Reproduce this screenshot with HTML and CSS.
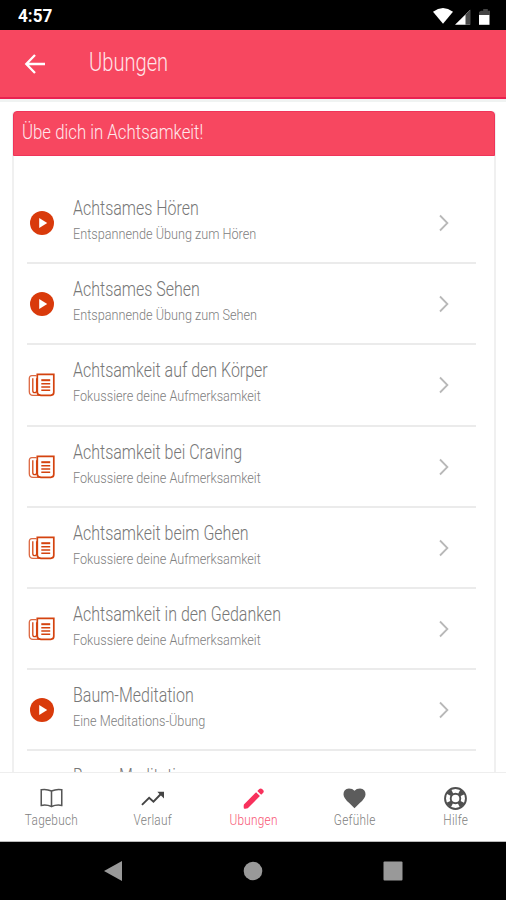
FILE: index.html
```html
<!DOCTYPE html>
<html lang="de">
<head>
<meta charset="utf-8">
<title>Ubungen</title>
<link rel="stylesheet" href="styles.css">
</head>
<body>
<svg class="defs" aria-hidden="true">
  <symbol id="play" viewBox="0 0 28 28"><circle cx="14" cy="14" r="12" fill="#d93a0b"/><path d="M11.200 9v10l8-5z" fill="#fff"/></symbol>
  <symbol id="news" viewBox="0 0 28 28" fill="none" stroke="#d4430f"><path d="M8.500 4.600H3.900Q1.300 4.600 1.300 7.600v12.800q0 3.700 3.700 4h8" stroke-width="1.300" stroke="#dc6842"/><path d="M9.300 3.400h16.500v17.900q0 3-3 3h-10q-3.500 0-3.500-3z" stroke-width="1.700"/><path d="M4.800 7.200v12.500q0 2 1.900 2t1.900-2V7.200" stroke-width="1.300"/><path d="M13.300 9.200h8.900" stroke-width="2"/><path d="M13.300 12.700h8.900M13.300 16h8.900M13.300 19.300h8.900" stroke-width="1.400"/></symbol>
  <symbol id="chev" viewBox="0 0 12 18"><path d="M2 1.500 9.400 9 2 16.500" fill="none" stroke="#b8b8b8" stroke-width="1.800"/></symbol>
</svg>
<div class="status">
  <span class="clock">4:57</span>
  <svg width="60" height="20" viewBox="0 0 60 20"><path d="M0 4.700Q10-2.700 20 4.700L10 16.800z" fill="#fff"/><path d="M37 3v14.800H22z" fill="#fff"/><path d="M32.500 7.500 37.500 2.500v15.300h-5z" fill="#4a4a4a"/><path d="M48 3.700h2.200V2h4.600v1.700H57V8H46V5z" fill="#444"/><path d="M46 8h10.500v9.800H46z" fill="#fff"/></svg>
</div>
<header class="appbar">
  <svg width="22" height="22" viewBox="0 0 22 22" fill="none" stroke="#fff" stroke-width="2.300"><path d="M21 11H3M11 2 2.300 11l8.700 9"/></svg>
  <h1><span class="t-title">Ubungen</span></h1>
</header>
<main class="content">
  <section class="card">
    <h2><span class="t-head">Übe dich in Achtsamkeit!</span></h2>
    <ul>
      <li><svg class="ico"><use href="#play"/></svg><div class="copy"><span class="name">Achtsames Hören</span><span class="desc">Entspannende Übung zum Hören</span></div><svg class="chev"><use href="#chev"/></svg></li>
      <li><svg class="ico"><use href="#play"/></svg><div class="copy"><span class="name">Achtsames Sehen</span><span class="desc">Entspannende Übung zum Sehen</span></div><svg class="chev"><use href="#chev"/></svg></li>
      <li><svg class="ico"><use href="#news"/></svg><div class="copy"><span class="name">Achtsamkeit auf den Körper</span><span class="desc">Fokussiere deine Aufmerksamkeit</span></div><svg class="chev"><use href="#chev"/></svg></li>
      <li><svg class="ico"><use href="#news"/></svg><div class="copy"><span class="name">Achtsamkeit bei Craving</span><span class="desc">Fokussiere deine Aufmerksamkeit</span></div><svg class="chev"><use href="#chev"/></svg></li>
      <li><svg class="ico"><use href="#news"/></svg><div class="copy"><span class="name">Achtsamkeit beim Gehen</span><span class="desc">Fokussiere deine Aufmerksamkeit</span></div><svg class="chev"><use href="#chev"/></svg></li>
      <li><svg class="ico"><use href="#news"/></svg><div class="copy"><span class="name">Achtsamkeit in den Gedanken</span><span class="desc">Fokussiere deine Aufmerksamkeit</span></div><svg class="chev"><use href="#chev"/></svg></li>
      <li><svg class="ico"><use href="#play"/></svg><div class="copy"><span class="name">Baum-Meditation</span><span class="desc">Eine Meditations-Übung</span></div><svg class="chev"><use href="#chev"/></svg></li>
      <li><div class="ico"></div><div class="copy"><span class="name">Baum-Meditation</span></div></li>
    </ul>
  </section>
</main>
<nav class="tabs">
  <a><svg viewBox="0 0 24 24" fill="none" stroke="#555" stroke-width="1.600"><path d="M12 4.200Q7 1.800 1.300 2.800v16.400q5.700-1 10.700 1.200 5-2.200 10.700-1.200V2.800Q17 1.800 12 4.200zM12 4.200v16"/></svg><span>Tagebuch</span></a>
  <a><svg viewBox="0 0 24 24" fill="none" stroke="#444" stroke-width="2"><path d="M1 18.700 8.500 11.300l4.500 4L21.500 6.500"/><path d="M17 5h7v7z" fill="#444" stroke="none"/></svg><span>Verlauf</span></a>
  <a class="on"><svg viewBox="0 0 24 24" fill="#f8315c"><path d="M2 18.200 14.700 5.500l4 4L6 22.200q-2 .8-4 .3-.5-2 0-4.300zM16 4.200l2-2q1.500-1.200 3 0l1.200 1.200q1 1.300 0 2.600l-2.200 2.200z"/></svg><span>Ubungen</span></a>
  <a><svg viewBox="0 0 24 24" fill="#5c5c5c"><path d="M12 22.300Q10 20.300 6.500 16.800.5 11.500.5 7.500.5 2 6.200 1.500 10 1.500 12 4q2-2.500 5.800-2.500Q23.500 2 23.500 7.500q0 4-6 9.300-3.500 3.500-5.500 5.500z"/></svg><span>Gefühle</span></a>
  <a><svg viewBox="0 0 24 24" fill="none" stroke="#505050"><circle cx="12" cy="12" r="10.900" stroke-width="2"/><circle cx="12" cy="12" r="5" stroke-width="2"/><circle cx="12" cy="12" r="7.900" stroke-width="5" stroke-dasharray="5 7.409" stroke-dashoffset="-3.705"/></svg><span>Hilfe</span></a>
</nav>
<footer class="system">
  <svg width="20" height="22" viewBox="0 0 20 22"><path d="M1 11 19 1v20z" fill="#999"/></svg>
  <svg width="20" height="20" viewBox="0 0 20 20"><circle cx="10" cy="10" r="9.300" fill="#999"/></svg>
  <svg width="20" height="20" viewBox="0 0 20 20"><rect x=".5" y=".5" width="19" height="19" rx="1" fill="#999"/></svg>
</footer>
</body>
</html>
```
FILE: styles.css
```css
* { box-sizing: border-box; }
body { margin: 0; width: 506px; height: 900px; overflow: hidden; display: flex; flex-direction: column; background: #fff; font-family: Roboto, "Liberation Sans", sans-serif; font-weight: 300; }
h1, h2, ul { margin: 0; padding: 0; font-weight: 300; list-style: none; }
.defs { display: none; }
.status { flex: 0 0 30px; background: #000; color: #fff; display: flex; justify-content: space-between; align-items: center; padding: 1px 13px 0 18px; }
.status svg { margin-top: 3px; overflow: visible; }
.clock { font-size: 18px; font-weight: 700; transform: scaleX(.95); transform-origin: left; }
.appbar { flex: 0 0 69px; background: #f74760; border-bottom: 2px solid #e92250; display: flex; align-items: center; padding-left: 24px; }
.appbar h1 { margin-left: 43px; color: #ffe3e8; line-height: 30px; font-size: 25px; padding-bottom: 2px; }
.t-title, .t-head, .name, .desc, .tabs span { display: block; white-space: nowrap; transform-origin: left; }
.t-title { transform: scaleX(.805); }
.t-head { transform: scaleX(.8); }
.name { transform: scaleX(.82); }
.desc, .tabs span { transform: scaleX(.845); }
.content { flex: 0 0 673px; overflow: hidden; padding: 9px 11px 0 12px; border-top: 3px solid #f0f3f2; }
.card { border: 2px solid #f0f0f0; border-top: 0; border-radius: 4px 4px 0 0; width: 484px; }
.card h2 { margin: 0 -1px; height: 45px; background: #f74760; border: 1px solid #ef3459; border-radius: 4px 4px 0 0; color: #ffe8ec; font-size: 21px; line-height: 40px; padding-left: 8px; }
.card ul { padding: 27px 18px 0 13px; }
.card li { height: 81.200px; border-bottom: 2px solid #ebebeb; display: flex; align-items: center; }
.ico { width: 28px; height: 28px; flex: none; margin: 1px 0 0 1px; }
.copy { flex: 1; margin-left: 17px; align-self: flex-start; padding-top: 13px; }
.name { color: #777; font-size: 19.500px; line-height: 26px; }
.desc { color: #808080; font-size: 15px; line-height: 26px; margin-top: -1px; }
.chev { width: 12px; height: 18px; margin: 1px 26px 0 0; }
.tabs { flex: 0 0 70px; background: #fff; border-top: 1px solid #eee; border-bottom: 1px solid #bbb; display: grid; grid-template-columns: repeat(5, 1fr); }
.tabs a { display: flex; flex-direction: column; align-items: center; padding: 14px 0 0 1px; color: #808080; font-size: 14px; line-height: 20px; }
.tabs svg { width: 23px; height: 23px; }
.tabs span { transform-origin: center; letter-spacing: .3px; }
.tabs .on { color: #f85574; }
.system { flex: 1; background: #000; display: flex; justify-content: center; align-items: center; gap: 120px; }
```
